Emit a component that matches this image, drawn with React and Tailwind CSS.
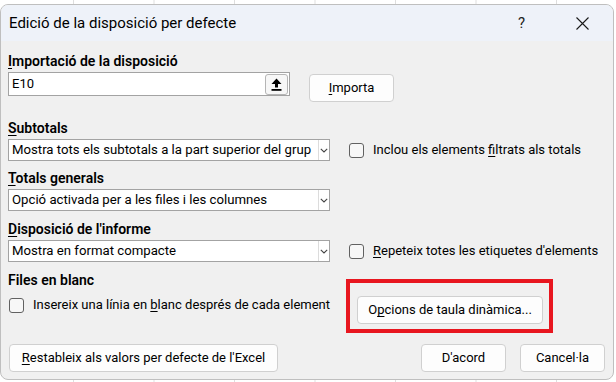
import React from "react";

const F = { fontFamily: "Roboto, 'Noto Sans', sans-serif" };

function U({ children }) {
  return <span className="underline underline-offset-[2px] decoration-1">{children}</span>;
}

function Chevron() {
  return (
    <svg width="8" height="5" viewBox="0 0 8 5" fill="none">
      <path d="M0.8 0.8 L4 4 L7.2 0.8" stroke="#444" strokeWidth="1.1" />
    </svg>
  );
}

function Select({ text }) {
  return (
    <div className="flex h-[22px] w-[322px] border border-[#a3a3a3] bg-white">
      <div className="flex-1 overflow-hidden whitespace-nowrap pl-[3px] text-[13.2px] leading-[20px] text-black">
        {text}
      </div>
      <div className="flex w-[11px] shrink-0 items-center justify-center border-l border-[#dcdcdc]">
        <Chevron />
      </div>
    </div>
  );
}

function Check({ children }) {
  return (
    <div className="flex items-center gap-[9px] whitespace-nowrap">
      <div className="h-[15px] w-[15px] shrink-0 rounded-[3px] border border-[#616161] bg-[#f7f7f7]" />
      <div className="text-[13px] leading-[18px] text-black">{children}</div>
    </div>
  );
}

function Label({ children, className = "" }) {
  return (
    <div className={"h-[20px] whitespace-nowrap text-[14px] font-semibold leading-[20px] text-black " + className}>
      {children}
    </div>
  );
}

function Btn({ children, className = "" }) {
  return (
    <div
      className={
        "flex h-[28px] shrink-0 items-center justify-center whitespace-nowrap rounded-[4px] border border-[#d0d0d0] bg-[#fdfdfd] text-[13px] text-black " +
        className
      }
    >
      {children}
    </div>
  );
}

export default function App() {
  return (
    <div
      className="h-[382px] w-[616px] overflow-hidden bg-white bg-[linear-gradient(to_right,#dedede_1px,transparent_1px)] bg-[size:80.5px_100%] bg-[position:73px_0] pt-[4px]"
      style={F}
    >
      <div className="flex h-[376px] w-[614px] flex-col overflow-hidden rounded-[8px] border border-[#bfbfbf] bg-[#f0f0f0]">
        {/* title bar */}
        <div className="flex h-[36px] shrink-0 items-center bg-[#eef2f9] pl-[8px]">
          <div className="text-[15px] text-black">Edició de la disposició per defecte</div>
          <div className="ml-auto mr-[51px] text-[15px] text-[#222]">?</div>
          <svg width="13" height="13" viewBox="0 0 13 13" className="mr-[24px]">
            <path d="M0.5 0.5 L12.5 12.5 M12.5 0.5 L0.5 12.5" stroke="#1a1a1a" strokeWidth="1.1" />
          </svg>
        </div>

        {/* body */}
        <div className="flex flex-1 flex-col pl-[7px] pr-[8px]">
          <Label className="mt-[10px]">
            <U>I</U>mportació de la disposició
          </Label>
          <div className="mt-[1px] flex h-[29px] items-start">
            <div className="flex h-[24px] w-[282px] items-center border border-[#a3a3a3] bg-white">
              <div className="flex-1 pl-[3px] text-[13px] text-black">E10</div>
              <div className="mr-[1px] flex h-[21px] w-[23px] items-center justify-center rounded-[3px] border border-[#b5b5b5] bg-[#f7f7f7]">
                <svg width="11" height="13" viewBox="0 0 11 13">
                  <path d="M5.5 0.5 L10.5 6 L7 6 L7 9.5 L4 9.5 L4 6 L0.5 6 Z" fill="#000" />
                  <rect x="0.5" y="11" width="10" height="1.8" fill="#000" />
                </svg>
              </div>
            </div>
            <Btn className="ml-[19px] mt-[2px] h-[27px] w-[85px]">
              <span>
                <U>I</U>mporta
              </span>
            </Btn>
          </div>

          <Label className="mt-[17px]">
            <U>S</U>ubtotals
          </Label>
          <div className="mt-[1px] flex items-center">
            <Select text="Mostra tots els subtotals a la part superior del grup" />
            <div className="ml-[19px]">
              <Check>
                Inclou els elements <U>f</U>iltrats als totals
              </Check>
            </div>
          </div>

          <Label className="mt-[7px]">
            <U>T</U>otals generals
          </Label>
          <div className="mt-[1px] flex">
            <Select text="Opció activada per a les files i les columnes" />
          </div>

          <Label className="mt-[8px]">
            <U>D</U>isposició de l'informe
          </Label>
          <div className="mt-[1px] flex items-center">
            <Select text="Mostra en format compacte" />
            <div className="ml-[19px]">
              <Check>
                <U>R</U>epeteix totes les etiquetes d'elements
              </Check>
            </div>
          </div>

          <div className="mt-[8px] flex">
            <div className="w-[338px] shrink-0">
              <Label>Files en blanc</Label>
              <div className="mt-[6px] pl-[1px]">
                <Check>
                  Insereix una línia en <U>b</U>lanc després de cada element
                </Check>
              </div>
            </div>
            <div className="mt-[9px] h-[54px] w-[207px] shrink-0 border-[4px] border-[#e8161f] pl-[7px] pt-[13px]">
              <Btn className="h-[27px] w-[186px]">
                <span>
                  O<U>p</U>cions de taula dinàmica...
                </span>
              </Btn>
            </div>
          </div>

          <div className="mt-auto flex pb-[7px] pl-[1px]">
            <Btn className="w-[269px]">
              <span>
                <U>R</U>estableix als valors per defecte de l'Excel
              </span>
            </Btn>
            <Btn className="ml-auto w-[85px] border-[#0067c0]">D'acord</Btn>
            <Btn className="ml-[14px] w-[85px]">Cancel·la</Btn>
          </div>
        </div>
      </div>
    </div>
  );
}
